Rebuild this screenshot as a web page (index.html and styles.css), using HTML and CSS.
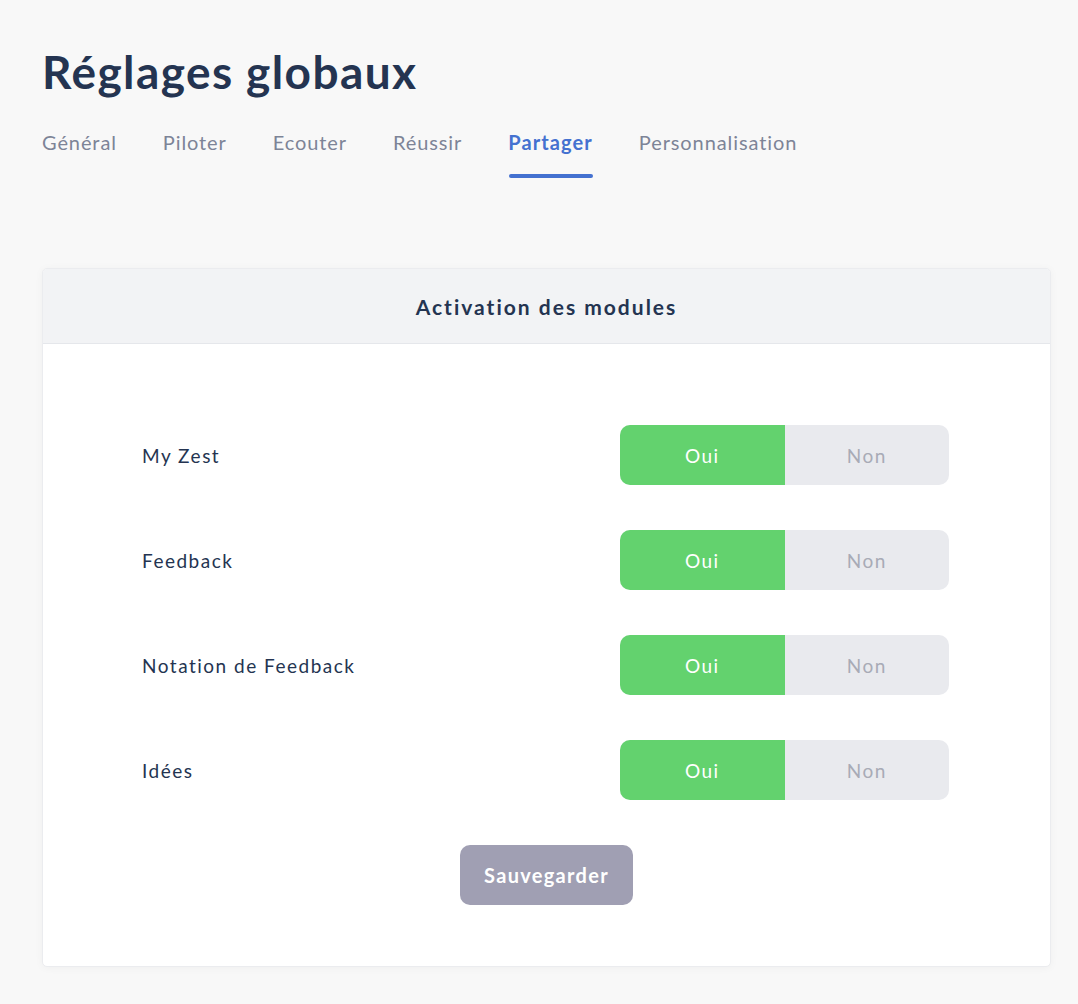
FILE: index.html
```html
<!DOCTYPE html>
<html lang="fr">
<head>
<meta charset="utf-8">
<title>Réglages globaux</title>
<link rel="stylesheet" href="styles.css">
</head>
<body>
<main class="page">
  <h1 class="title">Réglages globaux</h1>
  <nav class="tabs">
    <a class="tab">Général</a>
    <a class="tab">Piloter</a>
    <a class="tab">Ecouter</a>
    <a class="tab">Réussir</a>
    <a class="tab active">Partager</a>
    <a class="tab">Personnalisation</a>
  </nav>
  <section class="card">
    <header class="card-head">Activation des modules</header>
    <div class="card-body">
      <div class="row">
        <span class="label">My Zest</span>
        <div class="switch"><span class="opt yes">Oui</span><span class="opt no">Non</span></div>
      </div>
      <div class="row">
        <span class="label">Feedback</span>
        <div class="switch"><span class="opt yes">Oui</span><span class="opt no">Non</span></div>
      </div>
      <div class="row">
        <span class="label">Notation de Feedback</span>
        <div class="switch"><span class="opt yes">Oui</span><span class="opt no">Non</span></div>
      </div>
      <div class="row">
        <span class="label">Idées</span>
        <div class="switch"><span class="opt yes">Oui</span><span class="opt no">Non</span></div>
      </div>
      <div class="actions">
        <button class="save">Sauvegarder</button>
      </div>
    </div>
  </section>
</main>
</body>
</html>
```

FILE: styles.css
```css
* { box-sizing: border-box; }
html, body { margin: 0; padding: 0; }
body {
  background: #f8f8f8;
  font-family: "Lato", "Noto Sans", sans-serif;
  color: #243451;
}
.page {
  padding: 44px 27px 39px 42px;
}
.title {
  margin: 0;
  font-size: 46px;
  font-weight: 700;
  line-height: 56px;
  letter-spacing: 1.4px;
  color: #243451;
}
.tabs {
  display: flex;
  margin-top: 27px;
}
.tab {
  position: relative;
  font-size: 20px;
  line-height: 30px;
  letter-spacing: 0.9px;
  color: #7d8497;
  padding-bottom: 13px;
  margin-right: 46px;
}
.tab.active {
  color: #4471d0;
  font-weight: 700;
  letter-spacing: 1.1px;
}
.tab.active::after {
  content: "";
  position: absolute;
  left: 1px;
  right: 0;
  bottom: -8px;
  height: 4px;
  border-radius: 2px;
  background: #4471d0;
}
.card {
  margin-top: 98px;
  background: #fff;
  border: 1px solid #ebecef;
  border-radius: 5px;
  box-shadow: 0 1px 8px rgba(0,0,0,0.04);
  overflow: hidden;
}
.card-head {
  height: 75px;
  display: flex;
  align-items: center;
  justify-content: center;
  background: #f2f3f5;
  border-bottom: 1px solid #e5e7eb;
  font-size: 21px;
  font-weight: 700;
  letter-spacing: 2px;
  color: #243451;
}
.card-body {
  padding: 81px 101px 61px 99px;
  display: flex;
  flex-direction: column;
  gap: 45px;
}
.row {
  display: flex;
  align-items: center;
  justify-content: space-between;
}
.label {
  font-size: 19px;
  letter-spacing: 1.5px;
  color: #243451;
}
.switch {
  display: flex;
  width: 329px;
  height: 60px;
  border-radius: 10px;
  overflow: hidden;
  background: #e9eaee;
}
.opt {
  flex: 1;
  display: flex;
  align-items: center;
  justify-content: center;
  font-size: 19px;
  letter-spacing: 1.5px;
}
.opt.yes {
  background: #63d26e;
  color: #fff;
}
.opt.no {
  color: #a8abb6;
}
.actions {
  display: flex;
  justify-content: center;
}
.save {
  width: 173px;
  height: 60px;
  border: none;
  border-radius: 10px;
  background: #a09fb3;
  color: #fff;
  font-family: inherit;
  font-size: 20px;
  font-weight: 700;
  letter-spacing: 1.3px;
  margin-left: 2px;
}
```
